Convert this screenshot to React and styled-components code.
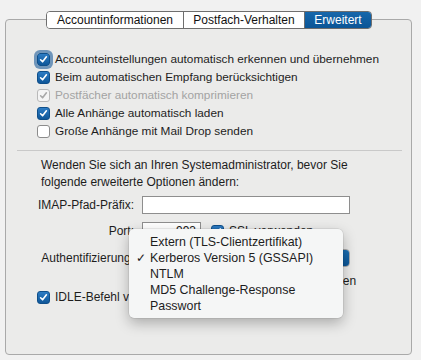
import React from "react";
import styled, { createGlobalStyle } from "styled-components";

const Global = createGlobalStyle`
  html, body { margin: 0; padding: 0; background: #f1f1f1; }
  body { font-family: "Liberation Sans", Arial, sans-serif; color: #1d1d1d; }
`;

const Page = styled.div`
  width: 421px;
  height: 360px;
  padding-top: 11px;
  box-sizing: border-box;
  overflow: hidden;
`;

const Tabs = styled.div`
  position: relative;
  z-index: 1;
  display: flex;
  margin-left: 46px;
  width: 326px;
  height: 18px;
  box-sizing: border-box;
  border: 1px solid #6e6e6e;
  border-radius: 4px;
  overflow: hidden;
  background: #fff;
`;

const Tab = styled.div`
  display: flex;
  align-items: center;
  justify-content: center;
  width: ${(p) => p.$w}px;
  font-size: 12px;
  color: ${(p) => (p.$active ? "#fff" : "#111")};
  background: ${(p) => (p.$active ? "linear-gradient(#1767ab, #0b5596)" : "#fff")};
  border-left: ${(p) => (p.$first ? "none" : "1px solid #6e6e6e")};
  box-sizing: border-box;
`;

const Panel = styled.div`
  position: relative;
  margin: -10px 0 0 5px;
  width: 407px;
  height: 336px;
  box-sizing: border-box;
  border: 1px solid #a9a9a9;
  border-radius: 4px;
  background: #ebebea;
  padding-top: 30px;
`;

const CheckList = styled.div`
  display: flex;
  flex-direction: column;
  padding-left: 31px;
`;

const CheckRow = styled.div`
  display: flex;
  align-items: center;
  gap: 5px;
  height: 18px;
  font-size: 11.8px;
  color: ${(p) => (p.$disabled ? "#a3a3a3" : "#1d1d1d")};
  white-space: nowrap;
`;

const Box = styled.span`
  display: inline-flex;
  align-items: center;
  justify-content: center;
  width: 13px;
  height: 13px;
  box-sizing: border-box;
  border-radius: 3px;
  flex: none;
  border: 1px solid
    ${(p) => (p.$disabled ? "#b9b9b9" : p.$checked ? "#0f4f8a" : "#8c8c8c")};
  background: ${(p) =>
    p.$disabled ? "#f4f4f4" : p.$checked ? "linear-gradient(#2d7cc4, #0f5799)" : "#fff"};
  box-shadow: ${(p) => (p.$focus ? "0 0 0 3px rgba(70, 120, 170, 0.75)" : "none")};
`;

const Check = ({ checked, disabled, focus }) => (
  <Box $checked={checked} $disabled={disabled} $focus={focus}>
    {checked && (
      <svg width="9" height="9" viewBox="0 0 9 9">
        <path
          d="M1.6 4.8 L3.6 6.8 L7.4 1.8"
          fill="none"
          stroke={disabled ? "#a8a8a8" : "#fff"}
          strokeWidth="1.6"
          strokeLinecap="round"
          strokeLinejoin="round"
        />
      </svg>
    )}
  </Box>
);

const Separator = styled.div`
  height: 1px;
  background: #c9c9c9;
  margin: 10px 9px 0 11px;
`;

const Note = styled.p`
  margin: 6px 0 0 35px;
  font-size: 12px;
  line-height: 17px;
`;

const Form = styled.div`
  display: grid;
  grid-template-columns: 128px 1fr;
  column-gap: 8px;
  margin-top: 5px;
`;

const Label = styled.div`
  display: flex;
  align-items: center;
  justify-content: flex-end;
  font-size: 12px;
  height: ${(p) => p.$h || 18}px;
  margin-top: ${(p) => p.$mt || 0}px;
  white-space: nowrap;
`;

const Field = styled.div`
  display: flex;
  align-items: center;
  gap: 10px;
  height: ${(p) => p.$h || 18}px;
  margin-top: ${(p) => p.$mt || 0}px;
  font-size: 12px;
  white-space: nowrap;
`;

const Input = styled.div`
  width: ${(p) => p.$w}px;
  height: 18px;
  box-sizing: border-box;
  border: 1px solid #8e8e8e;
  background: #fff;
  font-size: 12px;
  text-align: right;
  padding-right: 4px;
  line-height: 16px;
`;

const Inline = styled.span`
  display: inline-flex;
  align-items: center;
  gap: 5px;
`;

const PopupWrap = styled.div`
  position: relative;
  width: 208px;
  height: 18px;
`;

const PopupButton = styled.div`
  width: 208px;
  height: 18px;
  box-sizing: border-box;
  border-radius: 4px;
  background: #fff;
  border: 1px solid #aaa;
  display: flex;
  justify-content: flex-end;
  overflow: hidden;
`;

const PopupArrow = styled.div`
  width: 16px;
  height: 100%;
  background: linear-gradient(#1c6fb3, #0b5596);
`;

const Menu = styled.div`
  position: absolute;
  left: -13px;
  top: -20px;
  width: 214px;
  box-sizing: border-box;
  padding: 5px 0 4px;
  background: #f5f6f6;
  border-radius: 5px;
  box-shadow: 0 0 0 0.5px rgba(0, 0, 0, 0.12), 0 5px 14px rgba(0, 0, 0, 0.28);
  z-index: 2;
`;

const MenuItem = styled.div`
  display: flex;
  align-items: center;
  height: 16px;
  font-size: 12.4px;
  color: #1d1d1d;
  white-space: nowrap;
`;

const Mark = styled.span`
  width: 21px;
  padding-left: 7px;
  box-sizing: border-box;
  font-size: 12px;
`;

const IdleRow = styled.div`
  display: flex;
  align-items: center;
  gap: 5px;
  height: 16px;
  margin-left: 31px;
  font-size: 12px;
  white-space: nowrap;
`;

const items = [
  "Extern (TLS-Clientzertifikat)",
  "Kerberos Version 5 (GSSAPI)",
  "NTLM",
  "MD5 Challenge-Response",
  "Passwort",
];

export default function App() {
  return (
    <Page>
      <Global />
      <Tabs>
        <Tab $w={136} $first>Accountinformationen</Tab>
        <Tab $w={121}>Postfach-Verhalten</Tab>
        <Tab $w={67} $active>Erweitert</Tab>
      </Tabs>
      <Panel>
        <CheckList>
          <CheckRow><Check checked focus />Accounteinstellungen automatisch erkennen und übernehmen</CheckRow>
          <CheckRow><Check checked />Beim automatischen Empfang berücksichtigen</CheckRow>
          <CheckRow $disabled><Check checked disabled />Postfächer automatisch komprimieren</CheckRow>
          <CheckRow><Check checked />Alle Anhänge automatisch laden</CheckRow>
          <CheckRow><Check />Große Anhänge mit Mail Drop senden</CheckRow>
        </CheckList>
        <Separator />
        <Note>
          Wenden Sie sich an Ihren Systemadministrator, bevor Sie
          <br />
          folgende erweiterte Optionen ändern:
        </Note>
        <Form>
          <Label>IMAP-Pfad-Präfix:</Label>
          <Field><Input $w={208} /></Field>
          <Label $mt={8}>Port:</Label>
          <Field $mt={8}>
            <Input $w={59}>993</Input>
            <Inline><Check checked />SSL verwenden</Inline>
          </Field>
          <Label $mt={9}>Authentifizierung:</Label>
          <Field $mt={9}>
            <PopupWrap>
              <PopupButton><PopupArrow /></PopupButton>
              <Menu>
                {items.map((t, i) => (
                  <MenuItem key={t}>
                    <Mark>{i === 1 ? "✓" : ""}</Mark>
                    {t}
                  </MenuItem>
                ))}
              </Menu>
            </PopupWrap>
          </Field>
          <Label $mt={6} $h={16} />
          <Field $mt={6} $h={16}>
            <Inline><Check />Unsichere Authentifizierung erlauben</Inline>
          </Field>
        </Form>
        <IdleRow><Check checked />IDLE-Befehl verwenden, wenn unterstützt</IdleRow>
      </Panel>
    </Page>
  );
}
